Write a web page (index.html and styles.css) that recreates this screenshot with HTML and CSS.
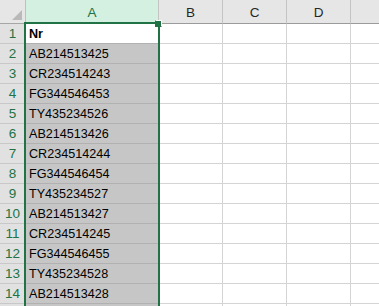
FILE: index.html
```html
<!DOCTYPE html>
<html>
<head>
<meta charset="utf-8">
<link rel="stylesheet" href="styles.css">
</head>
<body>
<div class="sheet">
  <div class="grid">
    <div class="corner"><svg class="tri" width="10" height="10" viewBox="0 0 10 10"><polygon points="10,0 10,10 0,10" fill="#b9b9b9"/></svg></div>
    <div class="colhead sel">A</div>
    <div class="colhead">B</div>
    <div class="colhead">C</div>
    <div class="colhead">D</div>
    <div class="colhead last"></div>

    <div class="rowhead">1</div><div class="cell a active bold">Nr</div><div class="cell"></div><div class="cell"></div><div class="cell"></div><div class="cell last"></div>
    <div class="rowhead">2</div><div class="cell a">AB214513425</div><div class="cell"></div><div class="cell"></div><div class="cell"></div><div class="cell last"></div>
    <div class="rowhead">3</div><div class="cell a">CR234514243</div><div class="cell"></div><div class="cell"></div><div class="cell"></div><div class="cell last"></div>
    <div class="rowhead">4</div><div class="cell a">FG344546453</div><div class="cell"></div><div class="cell"></div><div class="cell"></div><div class="cell last"></div>
    <div class="rowhead">5</div><div class="cell a">TY435234526</div><div class="cell"></div><div class="cell"></div><div class="cell"></div><div class="cell last"></div>
    <div class="rowhead">6</div><div class="cell a">AB214513426</div><div class="cell"></div><div class="cell"></div><div class="cell"></div><div class="cell last"></div>
    <div class="rowhead">7</div><div class="cell a">CR234514244</div><div class="cell"></div><div class="cell"></div><div class="cell"></div><div class="cell last"></div>
    <div class="rowhead">8</div><div class="cell a">FG344546454</div><div class="cell"></div><div class="cell"></div><div class="cell"></div><div class="cell last"></div>
    <div class="rowhead">9</div><div class="cell a">TY435234527</div><div class="cell"></div><div class="cell"></div><div class="cell"></div><div class="cell last"></div>
    <div class="rowhead">10</div><div class="cell a">AB214513427</div><div class="cell"></div><div class="cell"></div><div class="cell"></div><div class="cell last"></div>
    <div class="rowhead">11</div><div class="cell a">CR234514245</div><div class="cell"></div><div class="cell"></div><div class="cell"></div><div class="cell last"></div>
    <div class="rowhead">12</div><div class="cell a">FG344546455</div><div class="cell"></div><div class="cell"></div><div class="cell"></div><div class="cell last"></div>
    <div class="rowhead">13</div><div class="cell a">TY435234528</div><div class="cell"></div><div class="cell"></div><div class="cell"></div><div class="cell last"></div>
    <div class="rowhead">14</div><div class="cell a">AB214513428</div><div class="cell"></div><div class="cell"></div><div class="cell"></div><div class="cell last"></div>
    <div class="rowhead"></div><div class="cell a"></div><div class="cell"></div><div class="cell"></div><div class="cell"></div><div class="cell last"></div>
  </div>
  <div class="selection"></div>
  <div class="handle"></div>
</div>
</body>
</html>
```

FILE: styles.css
```css
html, body {
  margin: 0;
  padding: 0;
  background: #ffffff;
  overflow: hidden;
  width: 379px;
  height: 306px;
}

.sheet {
  position: relative;
  width: 379px;
  height: 306px;
  overflow: hidden;
  font-family: "Liberation Sans", Arial, sans-serif;
  font-size: 12.6px;
  color: #000;
}

.grid {
  display: grid;
  grid-template-columns: 26px 133px 64px 64px 64px 1fr;
  grid-template-rows: 24px repeat(15, 20px);
}

.grid > div {
  box-sizing: border-box;
  border-right: 1px solid #d4d4d4;
  border-bottom: 1px solid #d4d4d4;
  overflow: hidden;
  white-space: nowrap;
}

.corner {
  background: #e6e6e6;
  display: flex;
  justify-content: flex-end;
  align-items: flex-end;
  padding: 0 3px 3px 0;
  border-right-color: #bfbfbf !important;
  border-bottom-color: #a6a6a6 !important;
}

.colhead {
  background: #e6e6e6;
  display: flex;
  align-items: center;
  justify-content: center;
  color: #262626;
  font-size: 13.5px;
  padding-top: 1px;
  border-right-color: #c4c4c4 !important;
  border-bottom-color: #9b9b9b !important;
}

.colhead.sel {
  background: #d3f0e0;
  color: #217346;
}

.rowhead {
  background: #e1e1e1;
  color: #217346;
  display: flex;
  align-items: center;
  justify-content: center;
  font-size: 13.5px;
  border-bottom-color: #c8c8c8 !important;
  border-right-color: #217346 !important;
}

.cell {
  display: flex;
  align-items: flex-end;
  padding: 0 0 2px 3px;
}

.cell.a {
  background: #c6c6c6;
  border-bottom-color: #b1b1b1;
}

.cell.active {
  background: #ffffff;
}

.bold {
  font-weight: bold;
}

.last {
  border-right: none !important;
}

.selection {
  position: absolute;
  left: 24px;
  top: 22px;
  width: 136px;
  height: 300px;
  box-sizing: border-box;
  border: 2px solid #217346;
  border-bottom: none;
}

.handle {
  position: absolute;
  left: 155px;
  top: 20px;
  width: 5px;
  height: 5px;
  background: #217346;
  border: 1px solid #ffffff;
  border-bottom-color: transparent;
  border-left-color: transparent;
}
```
